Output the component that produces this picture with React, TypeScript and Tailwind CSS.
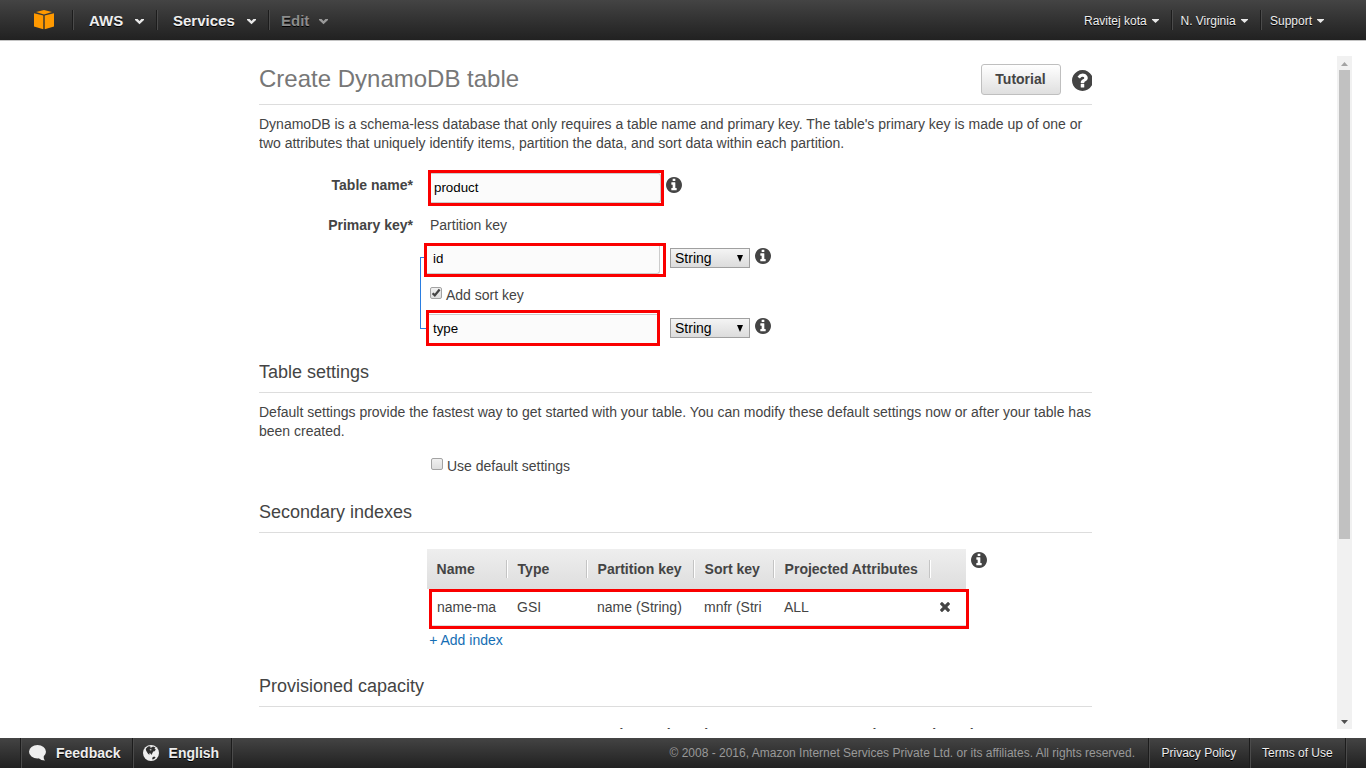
import type { ReactNode } from "react";

const DISC =
  "m0 0q0 209-103 385.5t-279.5 279.5-385.500 103-385.500-103-279.500-279.500-103-385.500 103-385.500 279.500-279.500 385.500-103 385.500 103 279.500 279.500 103 385.500z";

function Cube() {
  return (
    <svg width="20" height="20" viewBox="0 0 20 20" className="block">
      <path d="M2 2.1 10 0l8 2.1L10 4.4z" fill="#f90" />
      <path d="M0 3.2 9.3 5.5V19.2L0 16.4z" fill="#f90" />
      <path d="M20 3.2 10.7 5.5V19.2L20 16.4z" fill="#f90" />
    </svg>
  );
}

function Chevron({ color }: { color: string }) {
  return (
    <svg width="9" height="6" viewBox="0 0 9 6" className="block">
      <path d="M0 0h2.6l1.9 1.9L6.4 0H9v1L4.5 5.3 0 1z" fill={color} />
    </svg>
  );
}

function SmallCaret() {
  return (
    <svg width="7" height="4" viewBox="0 0 7 4" className="block">
      <path d="M0 0h7v.8L3.5 4 0 .8z" fill="#e8e8e8" />
    </svg>
  );
}

function Info() {
  return (
    <svg viewBox="128 128 1536 1536" className="block size-4 shrink-0" fill="#444">
      <path
        d={
          "M1152 1376v-160q0-14-9-23t-23-9h-96v-512q0-14-9-23t-23-9h-320q-14 0-23 9t-9 23v160q0 14 9 23t23 9h96v320h-96q-14 0-23 9t-9 23v160q0 14 9 23t23 9h448q14 0 23-9t9-23zm-128-896v-160q0-14-9-23t-23-9h-192q-14 0-23 9t-9 23v160q0 14 9 23t23 9h192q14 0 23-9t9-23zM1664 896" +
          DISC
        }
      />
    </svg>
  );
}

function Question() {
  return (
    <svg viewBox="128 128 1536 1536" className="mt-[14px] -mr-[0.5px] ml-3 block size-[21px] shrink-0" fill="#444">
      <path
        d={
          "M1024 1376v-192q0-14-9-23t-23-9h-192q-14 0-23 9t-9 23v192q0 14 9 23t23 9h192q14 0 23-9t9-23zm256-672q0-88-55.500-163t-138.500-116-170-41q-243 0-371 213-15 24 8 42l132 100q7 6 19 6 16 0 25-12 53-68 86-92 34-24 86-24 48 0 85.500 26t37.500 59q0 38-20 61t-68 45q-63 28-115.500 86.500t-52.500 125.500v36q0 14 9 23t23 9h192q14 0 23-9t9-23q0-19 21.500-49.500t54.500-49.500q32-18 49-28.500t46-35 44.500-48 28-60.500 12.500-81zM1664 896" +
          DISC
        }
      />
    </svg>
  );
}

function Remove() {
  return (
    <svg width="10" height="10" viewBox="302 366 1188 1188" className="block" fill="#444">
      <path d="M1490 1322q0 40-28 68l-136 136q-28 28-68 28t-68-28l-294-294-294 294q-28 28-68 28t-68-28l-136-136q-28-28-28-68t28-68l294-294-294-294q-28-28-28-68t28-68l136-136q28-28 68-28t68 28l294 294 294-294q28-28 68-28t68 28l136 136q28 28 28 68t-28 68l-294 294 294 294q28 28 28 68z" />
    </svg>
  );
}

function Bubble() {
  return (
    <svg width="17" height="16" viewBox="0 0 17 16" className="block" fill="#eee">
      <ellipse cx="8.5" cy="6.8" rx="8.5" ry="6.8" />
      <path d="M9.5 13 14.5 10.500Q14.500 14 16 15.600 12 15.600 9.500 13z" />
    </svg>
  );
}

function Globe() {
  return (
    <svg width="16" height="16" viewBox="0 0 16 16" className="block">
      <circle cx="8" cy="8" r="8" fill="#eee" />
      <path
        d="M3 3.400 5 1.600 7.500 1.200 7 2.400 8.600 2.600 10 1.400 12.500 2.400 11.500 3.600 12.800 4.600 11.600 6.200 10.200 6.600 9.200 8.600 8.400 10 7.600 8.400 6.200 8.200 6.600 9.800 5.200 9 3.600 6.600 2.800 4.800z"
        fill="#303030"
      />
      <path d="M9.200 12.800 11 11.600 12.600 12.200 11.200 14 9.400 14.400z" fill="#2a2a2a" />
      <path d="M6.600 4.200 8.200 3.800 8.600 5.200 7.200 5.600z" fill="#bbb" />
    </svg>
  );
}

function Divider({ className }: { className: string }) {
  return <span className={`w-[2px] shrink-0 border-l border-l-[#1c1c1c] bg-[#4b4b4b] ${className}`} />;
}

function TypeSelect() {
  return (
    <div className="flex h-5 w-20 shrink-0 items-center justify-between border border-[#a0a0a0] bg-linear-to-b from-[#f4f4f4] to-[#dcdcdc] pr-[6px] pl-1 text-[14px] leading-none text-black">
      <span>String</span>
      <svg width="6" height="7" viewBox="0 0 6 7">
        <path d="M0 0h6L3 7z" fill="#000" />
      </svg>
    </div>
  );
}

function Checkbox({ checked = false }: { checked?: boolean }) {
  return (
    <span className="block size-3 shrink-0 rounded-[2px] border border-[#a3a3a3] bg-linear-to-b from-[#f0f0f0] to-[#dedede]">
      {checked && (
        <svg width="10" height="10" viewBox="0 0 10 10" className="block">
          <path d="M1.600 5.200 3.800 7.400 8.600 1.600" fill="none" stroke="#444" strokeWidth="2.3" />
        </svg>
      )}
    </span>
  );
}

function SectionTitle({ children }: { children: ReactNode }) {
  return <h2 className="h-[31px] border-b border-[#ddd] text-[18px] leading-[20px] text-[#444]">{children}</h2>;
}

const columns = [
  { title: "Name", value: "name-ma", head: "w-20 pl-[9.6px]", cell: "w-20" },
  { title: "Type", value: "GSI", head: "w-20 pl-[10.6px]", cell: "w-20" },
  { title: "Partition key", value: "name (String)", head: "w-[107px] pl-[10.6px]", cell: "w-[107px]" },
  { title: "Sort key", value: "mnfr (Stri", head: "w-20 pl-[10.6px]", cell: "w-20" },
  { title: "Projected Attributes", value: "ALL", head: "w-[156px] pl-[10.6px]", cell: "w-[156px]" },
];

function Header() {
  return (
    <header className="flex h-[41px] shrink-0 items-start border-b border-[#c4c4c4] bg-linear-to-b from-[#444] to-[#212121] text-[#eee] [text-shadow:0_1px_0_#000]">
      <div className="flex h-10 w-full items-center">
        <div className="ml-[34px] w-[38px]"><Cube /></div>
        <Divider className="h-5" />
        <div className="flex w-[82px] items-center justify-between pl-[15px] text-[15px] font-bold">
          <span>AWS</span>
          <span className="mr-3 pt-[3px]"><Chevron color="#e8e8e8" /></span>
        </div>
        <Divider className="h-5" />
        <div className="flex w-[110px] items-center justify-between pl-[15px] text-[15px] font-bold">
          <span>Services</span>
          <span className="mr-3 pt-[3px]"><Chevron color="#e8e8e8" /></span>
        </div>
        <Divider className="h-5" />
        <div className="flex w-[70px] items-center justify-between pl-[11px] text-[15px] font-bold text-[#8c8c8c]">
          <span>Edit</span>
          <span className="mr-3 pt-[3px]"><Chevron color="#999" /></span>
        </div>
        <nav className="ml-auto flex items-center text-[12px]">
          <div className="flex w-[87px] items-center gap-[5px]">
            <span className="pt-[2px]">Ravitej kota</span><span className="pt-[2px]"><SmallCaret /></span>
          </div>
          <Divider className="h-5" />
          <div className="flex w-[87px] items-center gap-[5px] pl-[7.5px]">
            <span className="pt-[2px]">N. Virginia</span><span className="pt-[2px]"><SmallCaret /></span>
          </div>
          <Divider className="h-5" />
          <div className="flex w-[104px] items-center gap-[5px] pl-2">
            <span className="pt-[2px]">Support</span><span className="pt-[2px]"><SmallCaret /></span>
          </div>
        </nav>
      </div>
    </header>
  );
}

function KeyForm() {
  return (
    <section className="mt-[17px]">
      <div className="flex h-9">
        <div className="w-[154px] pt-[6px] text-right font-bold">Table name*</div>
        <div className="ml-[15px] h-9 w-[236px] border-3 border-[#fa0000]">
          <div className="flex h-[30px] items-center rounded-r-[3px] border-y border-r border-[#ccc] bg-[#fbfbfb] pb-[2px] pl-[3px] text-[13.33px] text-black">
            product
          </div>
        </div>
        <span className="mt-[7px] ml-[2px]"><Info /></span>
      </div>

      <div className="mt-[10px] flex h-[19px]">
        <div className="w-[154px] text-right font-bold">Primary key*</div>
        <div className="ml-[17px]">Partition key</div>
      </div>

      <div className="mt-2 flex h-[103px]">
        <div className="mt-[14px] ml-[161px] h-[72px] w-[6px] shrink-0 border-y border-l border-[#2a7de1]" />
        <div className="-ml-[2px] w-[242px] shrink-0">
          <div className="h-[34px] w-[242px] border-3 border-[#fa0000] bg-white">
            <div className="flex h-7 w-[233px] items-center rounded-br-[3px] border-r border-b border-[#ccc] bg-[#fbfbfb] pb-[3px] pl-[6px] text-[13.33px] text-black">
              id
            </div>
          </div>
          <div className="flex h-[33px] pl-[6px]">
            <span className="mt-[10px]"><Checkbox checked /></span>
            <span className="mt-[9px] ml-1">Add sort key</span>
          </div>
          <div className="ml-[2px] h-9 w-[234px] border-3 border-[#fa0000] bg-white pt-px">
            <div className="flex h-[29px] items-center border-t border-[#ccc] bg-[#fbfbfb] pb-[2px] pl-[4px] text-[13.33px] text-black">type</div>
          </div>
        </div>
        <div className="ml-1 flex w-[101px] shrink-0 flex-col">
          <div className="mt-[5px] flex h-[70px] items-start justify-between">
            <TypeSelect /><Info />
          </div>
          <div className="flex items-start justify-between">
            <TypeSelect /><Info />
          </div>
        </div>
      </div>
    </section>
  );
}

function IndexTable() {
  return (
    <div className="mt-4 flex h-[80px] items-start pl-[168px]">
      <div className="w-[542px] shrink-0">
        <div className="flex h-10 w-[539px] items-center bg-linear-to-b from-[#eee] to-[#dedede] font-bold">
          {columns.map((c) => (
            <div key={c.title} className={`flex h-[18px] shrink-0 items-center border-r border-[#c4c4c4] whitespace-nowrap shadow-[1px_0_0_#fff] ${c.head}`}>
              {c.title}
            </div>
          ))}
        </div>
        <div className="ml-[2px] h-10 w-[540px] border-3 border-[#fa0000]">
          <div className="flex h-[34px] w-[534px] items-center border-b border-[#ddd] pb-[3px] pl-[5px]">
            {columns.map((c) => (
              <div key={c.title} className={`shrink-0 whitespace-nowrap ${c.cell}`}>{c.value}</div>
            ))}
            <Remove />
          </div>
        </div>
      </div>
      <span className="mt-[3px] ml-[2px]"><Info /></span>
    </div>
  );
}

function Scrollbar() {
  return (
    <div className="mr-[14px] ml-auto flex w-[15px] shrink-0 flex-col items-center bg-[#f1f1f1]">
      <div className="flex h-[14px] items-center pt-[2px]">
        <svg width="7" height="4" viewBox="0 0 7 4"><path d="M0 4 3.5 0 7 4z" fill="#a3a3a3" /></svg>
      </div>
      <div className="h-[469px] w-[11px] bg-[#c1c1c1]" />
      <div className="mt-auto flex h-[15px] items-center">
        <svg width="7" height="4" viewBox="0 0 7 4"><path d="M0 0h7L3.5 4z" fill="#505050" /></svg>
      </div>
    </div>
  );
}

function Footer() {
  return (
    <footer className="flex h-[30px] shrink-0 items-center bg-linear-to-b from-[#444] to-[#212121] text-[12px] text-[#eee] [text-shadow:0_1px_0_#000]">
      <Divider className="ml-5 h-[30px]" />
      <div className="flex w-[110px] items-center pl-[7px] text-[14px] font-bold">
        <Bubble />
        <span className="ml-[10px]">Feedback</span>
      </div>
      <Divider className="h-[30px]" />
      <div className="flex w-[97px] items-center pl-[9px] text-[14px] font-bold">
        <Globe />
        <span className="ml-[9.6px]">English</span>
      </div>
      <Divider className="h-[30px]" />
      <span className="ml-auto text-[#999] [text-shadow:none]">© 2008 - 2016, Amazon Internet Services Private Ltd. or its affiliates. All rights reserved.</span>
      <Divider className="ml-[13px] h-[30px]" />
      <span className="w-[98.5px] pl-[11.5px]">Privacy Policy</span>
      <Divider className="h-[30px]" />
      <span className="w-[94px] pl-[11.5px]">Terms of Use</span>
      <Divider className="mr-[19.5px] h-[30px]" />
    </footer>
  );
}

export default function App() {
  return (
    <div className="flex h-[768px] w-[1366px] flex-col overflow-hidden bg-white font-['Liberation_Sans',Arial,sans-serif] text-[14px] leading-[19px] text-[#444]">
      <Header />
      <div className="mt-[15px] flex h-[673px] shrink-0">
        <main className="ml-[259px] h-[673px] w-[833px] overflow-hidden">
          <div className="flex h-[49px] items-start border-b border-[#ddd]">
            <h1 className="mt-2 text-[24px] leading-[30px] text-[#777]">Create DynamoDB table</h1>
            <button className="mt-2 -mr-px ml-auto h-[31px] w-20 rounded-[3px] border border-[#bfbfbf] bg-linear-to-b from-white to-[#dfdfdf] text-[14px] font-bold">
              Tutorial
            </button>
            <Question />
          </div>
          <p className="mt-[10px] whitespace-nowrap">
            DynamoDB is a schema-less database that only requires a table name and primary key. The table's primary key is made up of one or
            <br />
            two attributes that uniquely identify items, partition the data, and sort data within each partition.
          </p>
          <KeyForm />
          <div className="mt-4">
            <SectionTitle>Table settings</SectionTitle>
          </div>
          <p className="mt-[10px] whitespace-nowrap">
            Default settings provide the fastest way to get started with your table. You can modify these default settings now or after your table has
            <br />
            been created.
          </p>
          <div className="mt-4 flex h-[19px] pl-[172px]">
            <span className="mt-px"><Checkbox /></span>
            <span className="ml-1">Use default settings</span>
          </div>
          <div className="mt-[26px]">
            <SectionTitle>Secondary indexes</SectionTitle>
          </div>
          <IndexTable />
          <div className="mt-[2px] pl-[170.2px] text-[#146eb4]">+ Add index</div>
          <div className="mt-[26px]">
            <SectionTitle>Provisioned capacity</SectionTitle>
          </div>
          <div className="mt-[18px] flex font-bold">
            <span className="ml-[330px] w-[265px]">Read capacity units</span>
            <span>Write capacity units</span>
          </div>
        </main>
        <Scrollbar />
      </div>
      <div className="flex-1" />
      <Footer />
    </div>
  );
}
